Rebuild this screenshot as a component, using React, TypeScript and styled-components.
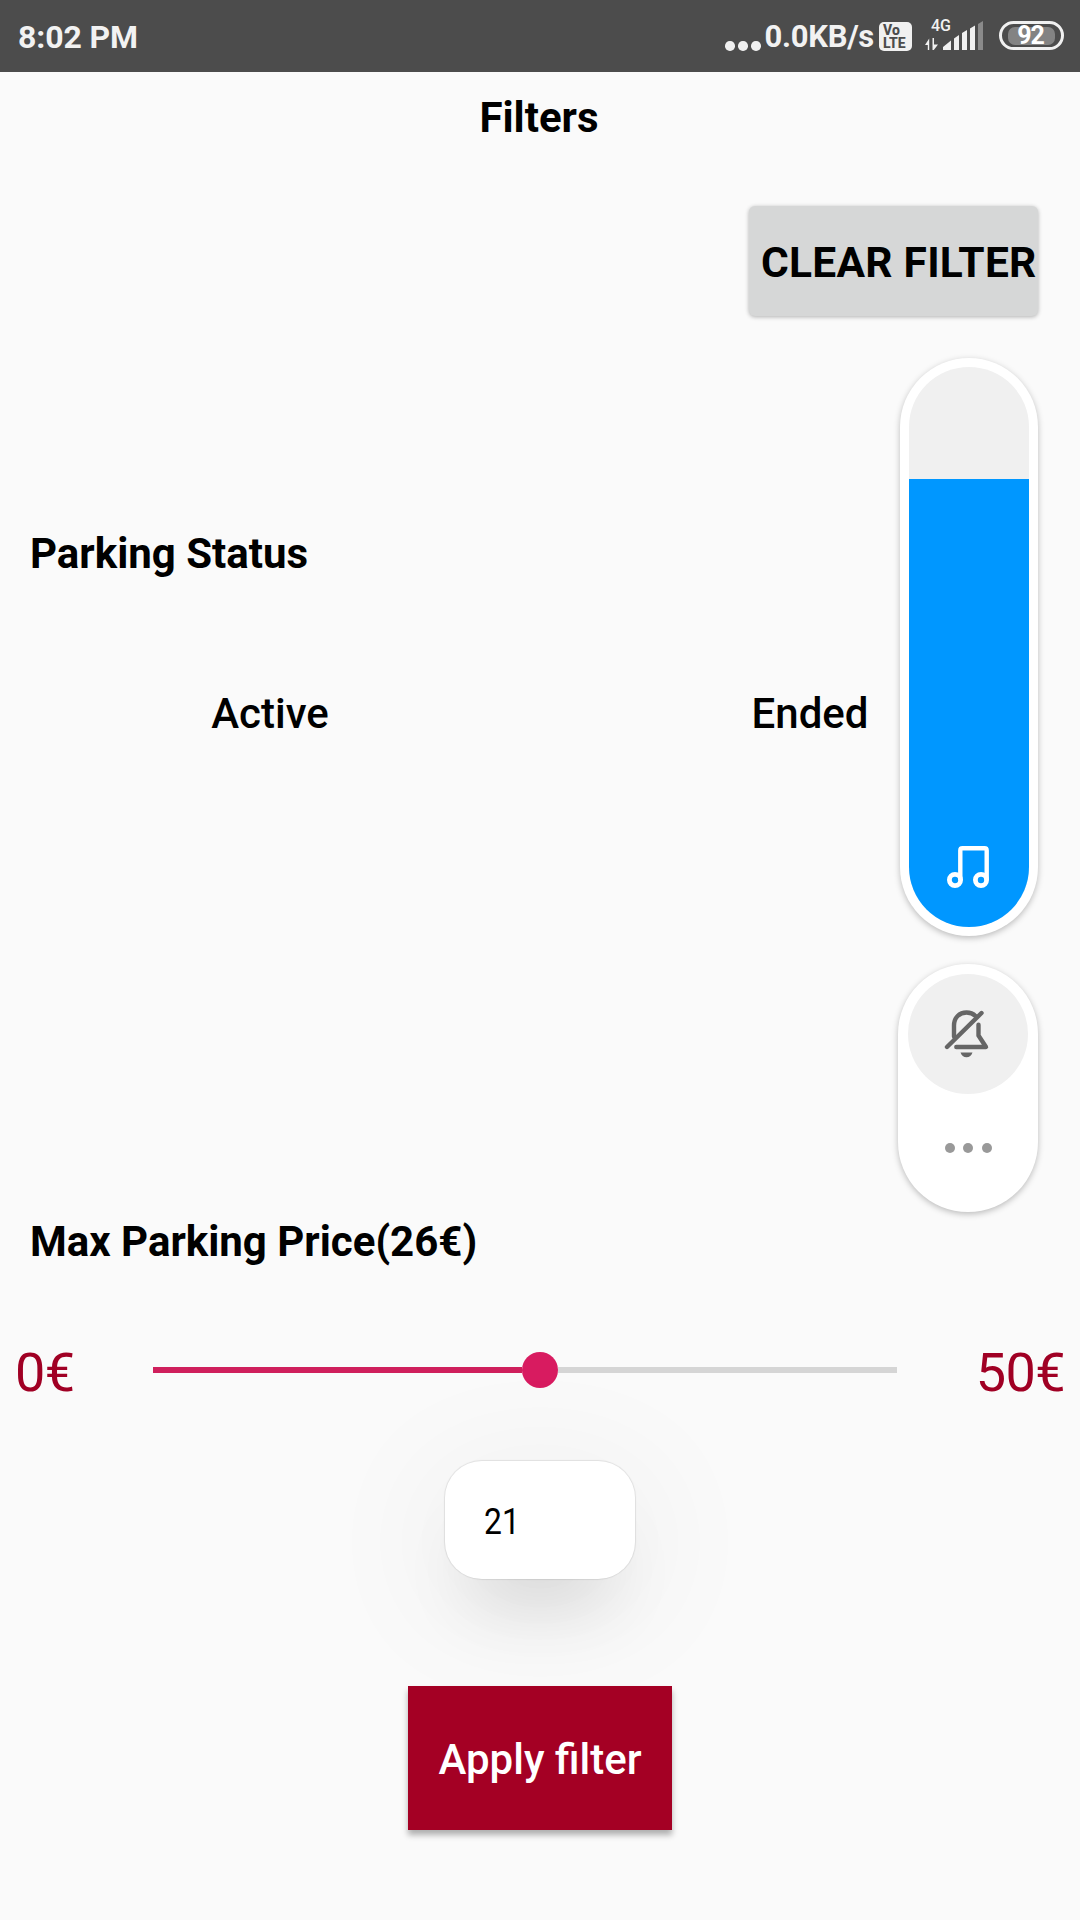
import React, { useState } from "react";
import styled, { createGlobalStyle } from "styled-components";

const GlobalStyle = createGlobalStyle`
  *, *::before, *::after { box-sizing: border-box; }
  body { margin: 0; background: #fafafa; }
  button, input { font-family: inherit; border: 0; margin: 0; padding: 0; }
`;

const Screen = styled.div`
  position: relative;
  display: flex;
  flex-direction: column;
  width: 1080px;
  height: 1920px;
  overflow: hidden;
  background: #fafafa;
  color: #000;
  font-family: Roboto, "Liberation Sans", sans-serif;
`;

const StatusBar = styled.header`
  display: flex;
  align-items: flex-start;
  justify-content: space-between;
  height: 72px;
  flex: none;
  padding: 0 16px 0 18px;
  background: #4c4c4c;
  color: #f2f2f2;
`;

const StatusText = styled.span<{ $size: number; $spacing?: number }>`
  font-size: ${(p) => p.$size}px;
  font-weight: 700;
  line-height: 74px;
  letter-spacing: ${(p) => p.$spacing ?? 0}px;
  white-space: nowrap;
`;

const StatusIcons = styled.div`
  display: flex;
  align-items: flex-start;
`;

const Dots = styled.div<{ $size: number; $gap: number; $color: string }>`
  display: flex;
  gap: ${(p) => p.$gap}px;
  & > i {
    width: ${(p) => p.$size}px;
    height: ${(p) => p.$size}px;
    border-radius: 50%;
    background: ${(p) => p.$color};
  }
`;

const StatusDots = styled(Dots)`
  padding: 41px 4px 0 0;
`;

const VolteBadge = styled.div`
  display: flex;
  flex-direction: column;
  width: 33px;
  height: 29px;
  margin: 22px 0 0 5px;
  padding: 2px 0 0 4px;
  border-radius: 5px;
  background: #f0f0f0;
  color: #4c4c4c;
  font-size: 14px;
  font-weight: 800;
  line-height: 12.5px;
  white-space: nowrap;
`;

const Signal = styled.div`
  display: flex;
  flex-direction: column;
  width: 60px;
  height: 32px;
  margin: 19px 0 0 13px;
`;

const SignalLabel = styled.span`
  height: 0;
  padding-left: 6px;
  font-size: 16px;
  font-weight: 500;
  line-height: 14px;
`;

const Battery = styled.div`
  display: flex;
  align-items: center;
  justify-content: center;
  width: 65px;
  height: 29px;
  margin: 21px 0 0 14px;
  border: 3px solid #f0f0f0;
  border-radius: 15px;
`;

const BatteryLevel = styled.div`
  display: flex;
  align-items: center;
  justify-content: center;
  width: 47px;
  height: 18px;
  padding-right: 2px;
  border-radius: 7px;
  background: #838383;
  color: #fff;
  font-size: 25px;
  font-weight: 700;
  letter-spacing: -1.2px;
`;

const Title = styled.h1`
  margin: 21px 0 0;
  font-size: 42px;
  font-weight: 700;
  line-height: 50px;
  text-align: center;
  padding-right: 2px;
`;

const ClearButton = styled.button`
  align-self: flex-end;
  width: 289px;
  height: 110px;
  margin: 63px 42px 0 0;
  padding: 3px 0 0 12px;
  border-radius: 6px;
  background: #d6d7d7;
  box-shadow: 0 1px 4px rgba(0, 0, 0, 0.3);
  color: #000;
  font-size: 42.5px;
  font-weight: 700;
  letter-spacing: 0.25px;
  text-align: left;
  white-space: nowrap;
`;

const SectionTitle = styled.h2<{ $top: number }>`
  margin: ${(p) => p.$top}px 0 0 30px;
  font-size: 42px;
  font-weight: 700;
  line-height: 50px;
  white-space: nowrap;
`;

const StatusOptions = styled.div`
  display: grid;
  grid-template-columns: 1fr 1fr;
  margin-top: 110px;
  font-size: 42px;
  font-weight: 500;
  line-height: 50px;
  text-align: center;
`;

const PriceRow = styled.div`
  display: flex;
  align-items: center;
  justify-content: space-between;
  height: 64px;
  margin-top: 74px;
  padding: 0 15px;
`;

const PriceLabel = styled.span`
  width: 112px;
  color: #a00024;
  font-size: 54px;
  line-height: 64px;
  letter-spacing: -0.6px;
  white-space: nowrap;
  &:last-child { text-align: right; }
`;

const Slider = styled.div`
  display: flex;
  align-items: center;
  width: 744px;
  height: 37px;
  margin-bottom: 7px;
  margin-right: 30px;
`;

const Track = styled.div<{ $active?: boolean }>`
  height: 6px;
  flex: ${(p) => (p.$active ? "0 0 auto" : "1")};
  background: ${(p) => (p.$active ? "#cf1f5c" : "#d5d5d5")};
`;

const Thumb = styled.div`
  flex: none;
  width: 36px;
  height: 36px;
  border-radius: 50%;
  background: #d81b60;
`;

const PriceBox = styled.label`
  display: flex;
  align-items: center;
  align-self: center;
  width: 190px;
  height: 118px;
  margin-top: 56px;
  padding: 4px 0 0 39px;
  border-radius: 37px;
  background: #fff;
  box-shadow: 0 0 1px 1px rgba(0, 0, 0, 0.09), 0 50px 70px -28px rgba(0, 0, 0, 0.13),
    0 22px 130px 22px rgba(0, 0, 0, 0.045);
`;

const PriceValue = styled.span`
  font-size: 37px;
  line-height: 44px;
  transform: scaleX(0.86);
  transform-origin: left;
`;

const ApplyButton = styled.button`
  align-self: center;
  position: relative;
  width: 264px;
  height: 144px;
  margin-top: 107px;
  padding-top: 3px;
  background: #a40024;
  box-shadow: 0 5px 6px rgba(0, 0, 0, 0.3);
  color: #fff;
  font-size: 42px;
  font-weight: 500;
  white-space: nowrap;
`;

const VolumeOverlay = styled.aside`
  position: absolute;
  top: 358px;
  right: 42px;
  display: flex;
  flex-direction: column;
  align-items: flex-end;
  gap: 28px;
`;

const Pill = styled.div<{ $width: number; $height: number }>`
  display: flex;
  flex-direction: column;
  align-items: center;
  width: ${(p) => p.$width}px;
  height: ${(p) => p.$height}px;
  padding-top: 9px;
  border-radius: 70px;
  background: #fff;
  box-shadow: 0 2px 6px rgba(0, 0, 0, 0.25);
`;

const VolumeTrack = styled.div`
  display: flex;
  flex-direction: column;
  justify-content: flex-end;
  width: 120px;
  height: 560px;
  border-radius: 60px;
  background: #f0f0f0;
  overflow: hidden;
`;

const VolumeLevel = styled.div`
  display: flex;
  align-items: flex-end;
  justify-content: center;
  height: 448px;
  padding: 0 3px 38px 0;
  background: #0097ff;
`;

const SilentButton = styled.button`
  display: flex;
  align-items: center;
  justify-content: center;
  width: 120px;
  height: 120px;
  margin: 1px 0 49px;
  padding-right: 2px;
  border-radius: 50%;
  background: #f0f0f0;
`;

const MusicIcon = () => (
  <svg width="44" height="44" viewBox="0 0 44 44" fill="none" stroke="#fff" strokeWidth="4.8">
    <circle cx="9" cy="35" r="5.6" />
    <circle cx="35" cy="35" r="5.6" />
    <path d="M14.3 35V5.500q0-2.200 2.200-2.200h22q2.200 0 2.200 2.200V35" strokeWidth="4.4" />
  </svg>
);

const BellOffIcon = () => (
  <svg width="46" height="50" viewBox="0 0 46 50" fill="none" stroke="#666" strokeWidth="4.400" strokeLinecap="round" strokeLinejoin="round">
    <path d="M10 27.500V16.500C10 8.500 15.500 3.500 22.500 3.500c4 0 7 1.500 9 3.500" />
    <path d="M34.500 15.800V26.500L42 38H12.300" />
    <path d="M3 38L37.500 4" />
    <path d="M16.500 43.500h12c-1 3-3 4.800-6 4.800s-5-1.800-6-4.800z" fill="#666" stroke="none" />
  </svg>
);

const SignalIcon = () => (
  <svg width="60" height="32" viewBox="0 0 60 32" fill="#f0f0f0">
    <path d="M0 26L4.200 19.500V31H2.800V26zM7.500 19H9v6.500h4L8.800 31H7.500z" />
    <path d="M18 31v-3l8-6.500V31zM29 31V19.500l5-3.500v15zM37 31V14l5-3v20zM45 31V9.500l5-3V31z" />
    <path d="M53 31V5l5-3v29z" fill="#8a8a8a" />
  </svg>
);

export default function App() {
  const [price] = useState(26);
  const [duration] = useState(21);
  const [min, max] = [0, 50];
  const progress = ((price - min) / (max - min)) * 744 - 18;

  return (
    <Screen>
      <GlobalStyle />
      <StatusBar>
        <StatusText $size={32} $spacing={-0.1}>8:02 PM</StatusText>
        <StatusIcons>
          <StatusDots $size={9.5} $gap={3.5} $color="#f0f0f0"><i /><i /><i /></StatusDots>
          <StatusText $size={31} $spacing={-0.3}>0.0KB/s</StatusText>
          <VolteBadge><span>Vo</span><span>LTE</span></VolteBadge>
          <Signal>
            <SignalLabel>4G</SignalLabel>
            <SignalIcon />
          </Signal>
          <Battery><BatteryLevel>92</BatteryLevel></Battery>
        </StatusIcons>
      </StatusBar>

      <Title>Filters</Title>
      <ClearButton>CLEAR FILTER</ClearButton>

      <SectionTitle $top={213}>Parking Status</SectionTitle>
      <StatusOptions>
        <span>Active</span>
        <span>Ended</span>
      </StatusOptions>

      <SectionTitle $top={478}>{`Max Parking Price(${price}€)`}</SectionTitle>
      <PriceRow>
        <PriceLabel>{`${min}€`}</PriceLabel>
        <Slider>
          <Track $active style={{ width: progress }} />
          <Thumb />
          <Track />
        </Slider>
        <PriceLabel>{`${max}€`}</PriceLabel>
      </PriceRow>

      <PriceBox><PriceValue>{duration}</PriceValue></PriceBox>
      <ApplyButton>Apply filter</ApplyButton>

      <VolumeOverlay>
        <Pill $width={138} $height={578}>
          <VolumeTrack>
            <VolumeLevel><MusicIcon /></VolumeLevel>
          </VolumeTrack>
        </Pill>
        <Pill $width={140} $height={248}>
          <SilentButton aria-label="Silent"><BellOffIcon /></SilentButton>
          <Dots $size={10} $gap={8.5} $color="#999"><i /><i /><i /></Dots>
        </Pill>
      </VolumeOverlay>
    </Screen>
  );
}
